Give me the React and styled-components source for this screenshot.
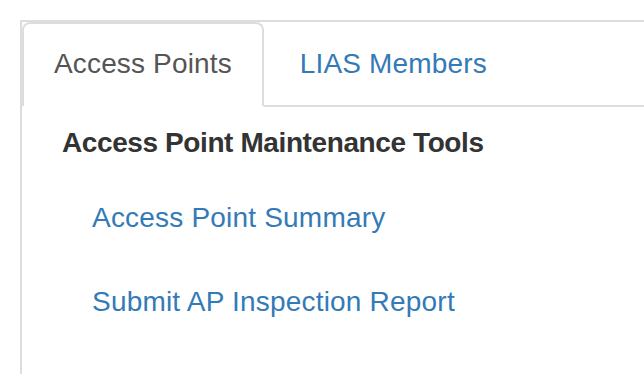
import styled, { createGlobalStyle } from "styled-components";

const GlobalStyle = createGlobalStyle`
  html, body {
    margin: 0;
    padding: 0;
    overflow: hidden;
    background: #fff;
    font-family: "Liberation Sans", Arial, sans-serif;
  }
`;

const Page = styled.div`
  height: 100vh;
  box-sizing: border-box;
  padding: 20px 0 0 20px;
  display: flex;
`;

/* panel runs past the right and bottom edges, so only its top and left borders show */
const Panel = styled.div`
  flex: 1;
  border-top: 2px solid #ddd;
  border-left: 2px solid #ddd;
  box-sizing: border-box;
`;

const TabBar = styled.ul`
  display: flex;
  list-style: none;
  margin: 0;
  padding: 0;
  border-bottom: 2px solid #ddd;
`;

const Tab = styled.li`
  margin-right: 4px;
  margin-bottom: -2px;
`;

const TabLink = styled.a`
  display: block;
  padding: 20px 30px 21px;
  font-size: 28px;
  line-height: 40px;
  letter-spacing: 0.15px;
  text-decoration: none;
  border: 2px solid ${(props) => (props.active ? "#ddd" : "transparent")};
  border-bottom-color: ${(props) => (props.active ? "#fff" : "transparent")};
  border-radius: 8px 8px 0 0;
  background: ${(props) => (props.active ? "#fff" : "transparent")};
  color: ${(props) => (props.active ? "#555" : "#337ab7")};
`;

const Content = styled.div`
  padding: 16px 40px 0;
`;

const Heading = styled.div`
  font-size: 28px;
  line-height: 40px;
  font-weight: 700;
  letter-spacing: -0.4px;
  color: #333;
`;

const Links = styled.ul`
  list-style: none;
  margin: 13px 0 0;
  padding: 0 0 0 30px;
`;

const LinkItem = styled.li`
  padding: 22px 0;
  font-size: 28px;
  line-height: 40px;
  letter-spacing: 0.2px;
`;

const Link = styled.a`
  color: #337ab7;
  text-decoration: none;
`;

const links = ["Access Point Summary", "Submit AP Inspection Report"];

export default function App() {
  return (
    <Page>
      <GlobalStyle />
      <Panel>
        <TabBar>
          <Tab>
            <TabLink active>Access Points</TabLink>
          </Tab>
          <Tab>
            <TabLink href="#">LIAS Members</TabLink>
          </Tab>
        </TabBar>
        <Content>
          <Heading>Access Point Maintenance Tools</Heading>
          <Links>
            {links.map((l) => (
              <LinkItem key={l}>
                <Link href="#">{l}</Link>
              </LinkItem>
            ))}
          </Links>
        </Content>
      </Panel>
    </Page>
  );
}
